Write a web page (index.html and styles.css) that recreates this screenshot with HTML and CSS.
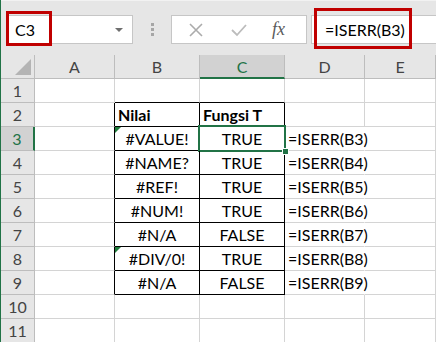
FILE: index.html
```html
<!DOCTYPE html>
<html lang="id">
<head>
  <meta charset="UTF-8">
  <title>ISERR</title>
  <link rel="stylesheet" href="styles.css">
</head>
<body>

  <!-- Formula bar -->
  <div class="toolbar">
    <div class="namebox">
      <span>C3</span>
      <span class="caret"></span>
      <div class="mark mark-name"></div>
    </div>
    <div class="grip"><i></i><i></i><i></i></div>
    <div class="fxbox">
      <svg width="16" height="16" viewBox="0 0 16 16"><path d="M2 2 L14 14 M14 2 L2 14" stroke="#ababab" stroke-width="1.6" fill="none"/></svg>
      <svg width="18" height="16" viewBox="0 0 18 16"><path d="M2 8 L7 13 L16 3" stroke="#bcbcbc" stroke-width="1.8" fill="none"/></svg>
      <span class="fx">fx</span>
    </div>
    <div class="formula">
      <span>=ISERR(B3)</span>
      <div class="mark mark-formula"></div>
    </div>
  </div>

  <!-- Sheet -->
  <div class="sheet">
    <div class="hd corner"></div>
    <div class="hd col">A</div>
    <div class="hd col">B</div>
    <div class="hd col active">C</div>
    <div class="hd col">D</div>
    <div class="hd col">E</div>

    <div class="hd row">1</div>
    <div class="c"></div><div class="c b-bot"></div><div class="c b-bot"></div><div class="c"></div><div class="c"></div>

    <div class="hd row">2</div>
    <div class="c b-right"></div><div class="c t th">Nilai</div><div class="c t th">Fungsi T</div><div class="c"></div><div class="c"></div>

    <div class="hd row active">3</div>
    <div class="c b-right"></div><div class="c t err">#VALUE!</div><div class="c t sel">TRUE</div><div class="c f">=ISERR(B3)</div><div class="c"></div>

    <div class="hd row">4</div>
    <div class="c b-right"></div><div class="c t">#NAME?</div><div class="c t">TRUE</div><div class="c f">=ISERR(B4)</div><div class="c"></div>

    <div class="hd row">5</div>
    <div class="c b-right"></div><div class="c t">#REF!</div><div class="c t">TRUE</div><div class="c f">=ISERR(B5)</div><div class="c"></div>

    <div class="hd row">6</div>
    <div class="c b-right"></div><div class="c t">#NUM!</div><div class="c t">TRUE</div><div class="c f">=ISERR(B6)</div><div class="c"></div>

    <div class="hd row">7</div>
    <div class="c b-right"></div><div class="c t">#N/A</div><div class="c t">FALSE</div><div class="c f">=ISERR(B7)</div><div class="c"></div>

    <div class="hd row">8</div>
    <div class="c b-right"></div><div class="c t err">#DIV/0!</div><div class="c t">TRUE</div><div class="c f">=ISERR(B8)</div><div class="c"></div>

    <div class="hd row">9</div>
    <div class="c b-right"></div><div class="c t">#N/A</div><div class="c t">FALSE</div><div class="c f">=ISERR(B9)</div><div class="c"></div>

    <div class="hd row">10</div>
    <div class="c"></div><div class="c"></div><div class="c"></div><div class="c"></div><div class="c"></div>

    <div class="hd row">11</div>
    <div class="c"></div><div class="c"></div><div class="c"></div><div class="c"></div><div class="c"></div>
  </div>

</body>
</html>
```

FILE: styles.css
```css
body {
  margin: 0;
  width: 435px;
  height: 342px;
  overflow: hidden;
  border-left: 1px solid #217346;
  background: #ffffff;
  font-family: Lato, 'Noto Sans', sans-serif;
  font-size: 16px;
  color: #000;
}

/* formula bar */
.toolbar {
  display: flex;
  align-items: flex-start;
  height: 55px;
  box-sizing: border-box;
  padding-top: 14px;
  background: #e6e6e6;
  border-top: 1px solid #f2f2f2;
}

.namebox, .fxbox, .formula {
  position: relative;
  height: 29px;
  box-sizing: border-box;
  background: #ffffff;
  border: 1px solid #c6c6c6;
  display: flex;
  align-items: center;
}

.namebox {
  width: 126px;
  margin-left: 6px;
  padding-left: 7px;
}

.caret {
  position: absolute;
  right: 9px;
  top: 12px;
  border-left: 4px solid transparent;
  border-right: 4px solid transparent;
  border-top: 4px solid #6f6f6f;
}

.grip {
  display: flex;
  flex-direction: column;
  gap: 2px;
  margin: 8px 0 0 18px;
}

.grip i {
  width: 3px;
  height: 3px;
  background: #a6a6a6;
}

.fxbox {
  width: 136px;
  margin-left: 17px;
  padding-left: 16px;
  gap: 26px;
}

.fx {
  font-family: 'Liberation Serif', serif;
  font-style: italic;
  font-size: 18px;
  color: #5a5a5a;
  margin-left: -2px;
}

.formula {
  flex: 1;
  margin-left: 4px;
  padding-left: 13px;
  border-right: none;
}

.mark {
  position: absolute;
  border: 3px solid #c00000;
  box-sizing: border-box;
}

.mark-name {
  left: -2px;
  top: -5px;
  width: 46px;
  height: 35px;
}

.mark-formula {
  left: 2px;
  top: -8px;
  width: 98px;
  height: 41px;
}

/* grid */
.sheet {
  display: grid;
  grid-template-columns: 34px 80px 85px 85px 80px 1fr;
  grid-auto-rows: 24px;
}

.hd, .c {
  position: relative;
  box-sizing: border-box;
  border-right: 1px solid #d4d4d4;
  border-bottom: 1px solid #d4d4d4;
  white-space: nowrap;
}

.hd {
  background: #e6e6e6;
  border-color: #bdbdbd;
  color: #444;
  display: flex;
  align-items: center;
  justify-content: center;
}

.hd.active {
  background: #d2d2d2;
  color: #217346;
}

.col.active {
  border-bottom: 2px solid #217346;
}

.row.active {
  border-right: 2px solid #217346;
}

.corner::after {
  content: "";
  position: absolute;
  right: 3px;
  bottom: 3px;
  width: 16px;
  height: 16px;
  background: #b4b4b4;
  clip-path: polygon(100% 0, 100% 100%, 0 100%);
}

.c {
  display: flex;
  align-items: center;
  padding: 0 3px;
}

.t {
  justify-content: center;
  border-right-color: #000;
  border-bottom-color: #000;
}

.th {
  justify-content: flex-start;
  font-weight: bold;
}

.b-right {
  border-right-color: #000;
}

.b-bot {
  border-bottom-color: #000;
}

.f {
  overflow: visible;
  border-right-color: transparent;
  z-index: 1;
}

.err::before {
  content: "";
  position: absolute;
  left: 0;
  top: 0;
  width: 6px;
  height: 6px;
  background: #1e7b3a;
  clip-path: polygon(0 0, 100% 0, 0 100%);
}

.sel::after {
  content: "";
  position: absolute;
  left: -2px;
  top: -2px;
  right: -2px;
  bottom: -2px;
  border: 2px solid #217346;
}

.sel::before {
  content: "";
  position: absolute;
  right: -5px;
  bottom: -5px;
  width: 5px;
  height: 5px;
  background: #217346;
  border: 1px solid #fff;
  z-index: 2;
}
```
